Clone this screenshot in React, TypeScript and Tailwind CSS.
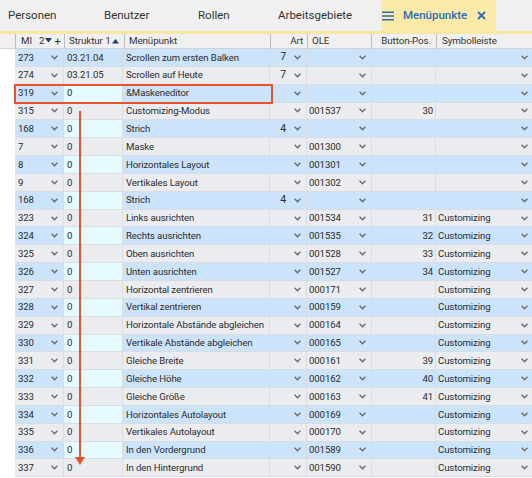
type Row = {
  mi: string;
  st: string;
  menu: string;
  art?: string;
  ole?: string;
  pos?: string;
  sym?: string;
};

const rows: Row[] = [
  { mi: "273", st: "03.21.04", menu: "Scrollen zum ersten Balken", art: "7" },
  { mi: "274", st: "03.21.05", menu: "Scrollen auf Heute", art: "7" },
  { mi: "319", st: "0", menu: "&Maskeneditor" },
  { mi: "315", st: "0", menu: "Customizing-Modus", ole: "001537", pos: "30" },
  { mi: "168", st: "0", menu: "Strich", art: "4" },
  { mi: "7", st: "0", menu: "Maske", ole: "001300" },
  { mi: "8", st: "0", menu: "Horizontales Layout", ole: "001301" },
  { mi: "9", st: "0", menu: "Vertikales Layout", ole: "001302" },
  { mi: "168", st: "0", menu: "Strich", art: "4" },
  { mi: "323", st: "0", menu: "Links ausrichten", ole: "001534", pos: "31", sym: "Customizing" },
  { mi: "324", st: "0", menu: "Rechts ausrichten", ole: "001535", pos: "32", sym: "Customizing" },
  { mi: "325", st: "0", menu: "Oben ausrichten", ole: "001528", pos: "33", sym: "Customizing" },
  { mi: "326", st: "0", menu: "Unten ausrichten", ole: "001527", pos: "34", sym: "Customizing" },
  { mi: "327", st: "0", menu: "Horizontal zentrieren", ole: "000171", sym: "Customizing" },
  { mi: "328", st: "0", menu: "Vertikal zentrieren", ole: "000159", sym: "Customizing" },
  { mi: "329", st: "0", menu: "Horizontale Abstände abgleichen", ole: "000164", sym: "Customizing" },
  { mi: "330", st: "0", menu: "Vertikale Abstände abgleichen", ole: "000165", sym: "Customizing" },
  { mi: "331", st: "0", menu: "Gleiche Breite", ole: "000161", pos: "39", sym: "Customizing" },
  { mi: "332", st: "0", menu: "Gleiche Höhe", ole: "000162", pos: "40", sym: "Customizing" },
  { mi: "333", st: "0", menu: "Gleiche Größe", ole: "000163", pos: "41", sym: "Customizing" },
  { mi: "334", st: "0", menu: "Horizontales Autolayout", ole: "000169", sym: "Customizing" },
  { mi: "335", st: "0", menu: "Vertikales Autolayout", ole: "000170", sym: "Customizing" },
  { mi: "336", st: "0", menu: "In den Vordergrund", ole: "001589", sym: "Customizing" },
  { mi: "337", st: "0", menu: "In den Hintergrund", ole: "001590", sym: "Customizing" },
];

const Chevron = () => (
  <svg width="7" height="5" viewBox="0 0 7 5" className="shrink-0">
    <polyline points="0.6,0.8 3.5,3.8 6.4,0.8" fill="none" stroke="#6b6b6b" strokeWidth="1.4" />
  </svg>
);

const App = () => {
  return (
    <div className="relative w-[532px] h-[478px] overflow-hidden bg-white font-['Roboto',sans-serif] text-[#2b2b2b]">
      {/* Tabs */}
      <div className="flex h-[31px] bg-[#f0f0f0] text-[11.5px] text-[#333]">
        <div className="w-[96px] pl-[8px] flex items-center">Personen</div>
        <div className="w-[94px] pl-[8px] flex items-center">Benutzer</div>
        <div className="w-[80px] pl-[8px] flex items-center">Rollen</div>
        <div className="w-[111px] pl-[8px] flex items-center">Arbeitsgebiete</div>
        <div className="w-[115px] bg-[#fde9a9] flex items-center pl-[1px] text-[#2a6db3] font-medium">
          <svg width="12" height="10" viewBox="0 0 12 10" className="mr-[9px]">
            <rect x="0" y="0.5" width="12" height="1.5" fill="#2a6db3" />
            <rect x="0" y="4.25" width="12" height="1.5" fill="#2a6db3" />
            <rect x="0" y="8" width="12" height="1.5" fill="#2a6db3" />
          </svg>
          <span>Menüpunkte</span>
          <svg width="9" height="9" viewBox="0 0 9 9" className="ml-[10px]">
            <path d="M1 1 L8 8 M8 1 L1 8" stroke="#2a6db3" strokeWidth="1.8" />
          </svg>
        </div>
      </div>
      <div className="h-[3px] bg-[#fbe7a4]" />

      {/* Header */}
      <div className="flex h-[15px] bg-[#f0f0f0] border-b border-[#cfd2d6] text-[9.8px] tracking-[-0.1px] text-[#333] leading-none">
        <div className="w-[15px]" />
        <div className="w-[49px] flex items-center border-l border-[#b9bcc0] pl-[5px]">
          <span>MI</span>
          <span className="ml-[7px] flex items-center">
            2
            <svg width="7" height="5" viewBox="0 0 7 5" className="ml-[1px]">
              <path d="M0 0 L7 0 L3.5 4.5 Z" fill="#1f3b66" />
            </svg>
          </span>
          <span className="ml-[2px] text-[11px]">+</span>
        </div>
        <div className="w-[60px] flex items-center border-l border-[#b9bcc0] pl-[4px]">
          <span>Struktur 1</span>
          <svg width="7" height="5" viewBox="0 0 7 5" className="ml-[1px]">
            <path d="M0 4.5 L7 4.5 L3.5 0 Z" fill="#1f3b66" />
          </svg>
        </div>
        <div className="w-[146px] flex items-center border-l border-[#b9bcc0] pl-[4px]">Menüpunkt</div>
        <div className="w-[37px] flex items-center justify-end border-l border-[#b9bcc0] pr-[4px]">Art</div>
        <div className="w-[64px] flex items-center border-l border-[#b9bcc0] pl-[4px]">OLE</div>
        <div className="w-[65px] flex items-center justify-end border-l border-[#b9bcc0] pr-[5px]">Button-Pos.</div>
        <div className="flex-1 flex items-center border-l border-[#b9bcc0] pl-[5px]">Symbolleiste</div>
      </div>

      {/* Rows */}
      <div className="flex flex-col text-[9.6px] tracking-[-0.1px] leading-none">
        {rows.map((r, i) => {
          const blue = i % 2 === 0;
          const bg = blue ? "bg-[#cce4fb]" : "bg-[#eaecef]";
          const stBg = blue && i >= 2 ? "bg-[#e6fbff]" : bg;
          return (
            <div key={i} className="flex h-[17.85px] shrink-0">
              <div className="w-[15px] bg-white" />
              <div className={`w-[49px] flex items-center justify-between pl-[3px] pr-[5px] border-b border-r border-[#d9dde2] ${bg}`}>
                <span>{r.mi}</span>
                <Chevron />
              </div>
              <div className={`w-[59px] flex items-center pl-[3px] border-b border-r border-[#d9dde2] ${stBg}`}>
                {r.st}
              </div>
              <div className={`w-[147px] flex items-center pl-[3px] border-b border-r border-[#d9dde2] whitespace-nowrap overflow-hidden ${bg}`}>
                {r.menu}
              </div>
              <div className={`w-[37px] flex items-center justify-end pr-[5px] border-b border-r border-[#d9dde2] ${bg}`}>
                <span className="mr-[8px] text-[10.5px]">{r.art}</span>
                <Chevron />
              </div>
              <div className={`w-[65px] flex items-center justify-between pl-[2px] pr-[5px] border-b border-r border-[#d9dde2] ${bg}`}>
                <span>{r.ole}</span>
                <Chevron />
              </div>
              <div className={`w-[64px] flex items-center justify-end pr-[2px] border-b border-r border-[#d9dde2] ${bg}`}>
                {r.pos}
              </div>
              <div className={`flex-1 flex items-center justify-between pl-[2px] pr-[4px] border-b border-[#d9dde2] ${bg}`}>
                <span>{r.sym}</span>
                <Chevron />
              </div>
            </div>
          );
        })}
      </div>

      {/* Highlight and arrow overlays */}
      <div className="absolute left-[14px] top-[84px] w-[259px] h-[20px] border-2 border-[#e8532b] rounded-[1px]" />
      <div className="absolute left-[79px] top-[111px] w-[2px] h-[348px] bg-[#e8532b]" />
      <svg width="10" height="8" viewBox="0 0 10 8" className="absolute left-[75px] top-[457px]">
        <path d="M0 0 L10 0 L5 8 Z" fill="#e8532b" />
      </svg>
    </div>
  );
};

export default App;
